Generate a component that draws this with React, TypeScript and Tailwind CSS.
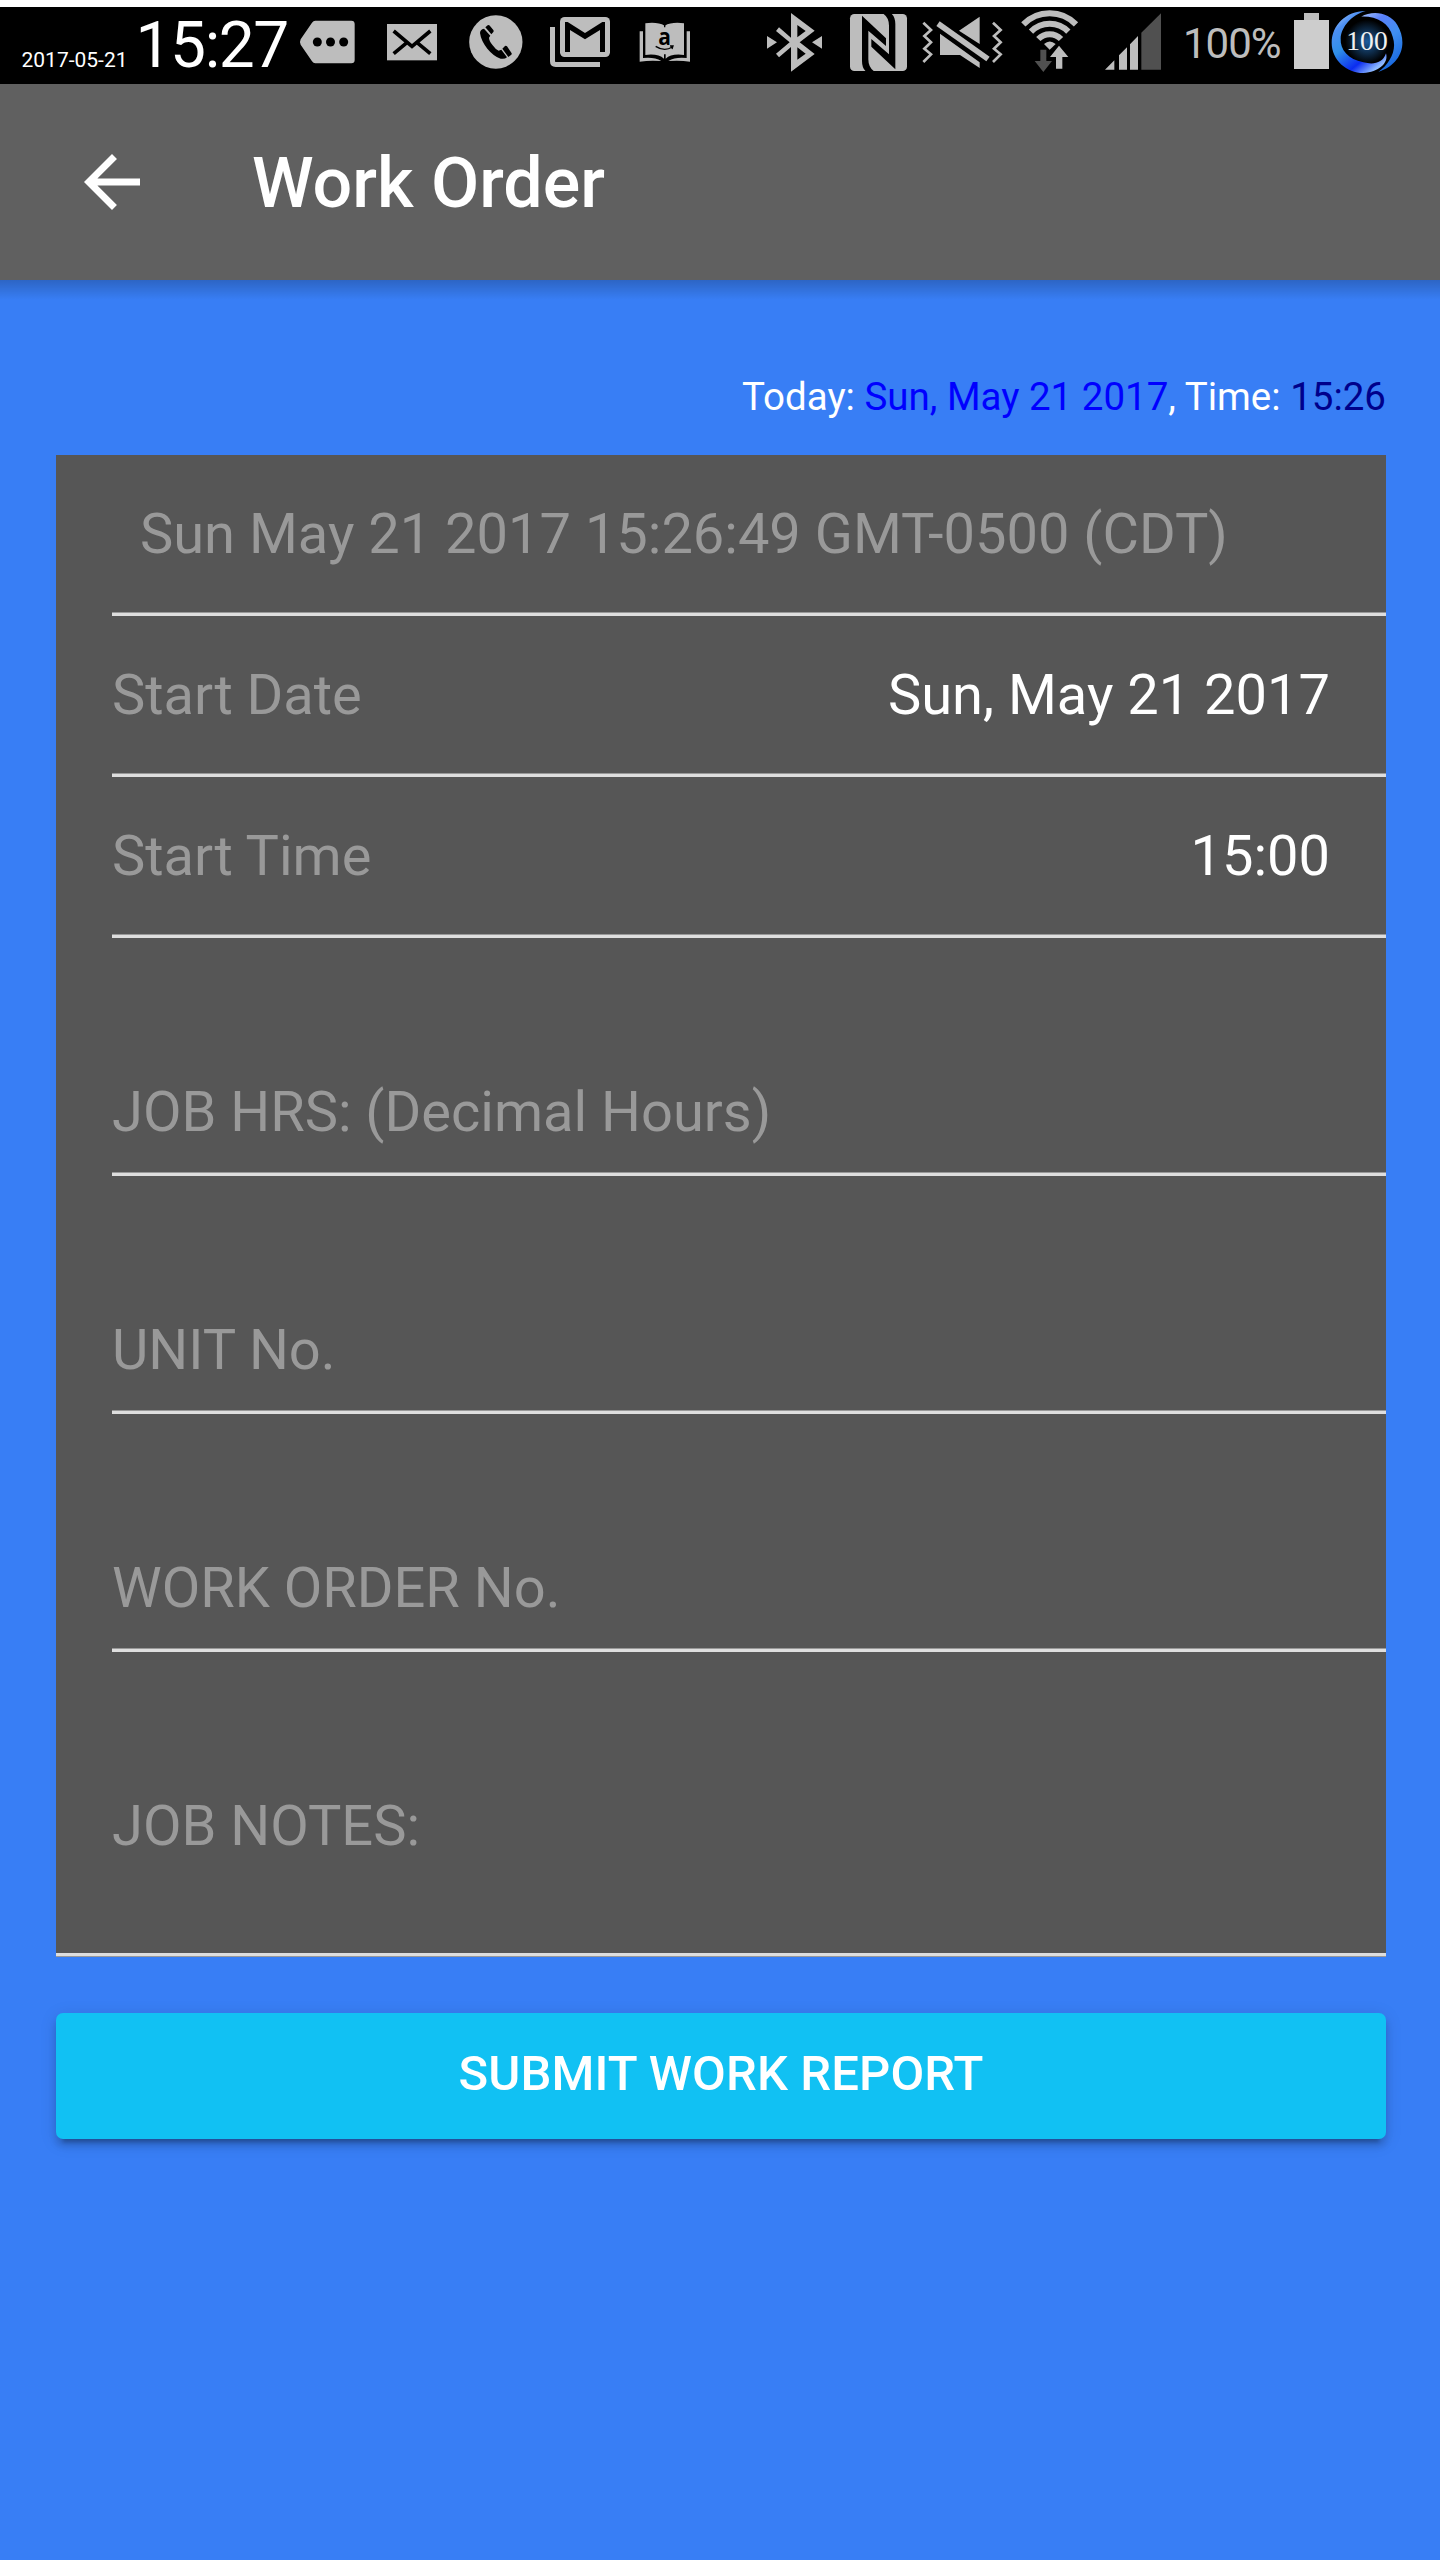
import type { ReactNode } from "react";

const GREY = "#bdbdbd";

function Glyph({ box, className, children }: { box: string; className: string; children: ReactNode }) {
  return (
    <svg viewBox={box} className={`h-[77px] shrink-0 ${className}`} fill={GREY}>
      {children}
    </svg>
  );
}

function StatusBar() {
  return (
    <div className="flex h-[77px] w-full bg-black text-white">
      <div className="flex w-[299px] shrink-0 items-baseline whitespace-nowrap pl-[21.500px]">
        <span className="w-[114px] text-[21px] leading-[77px]">2017-05-21</span>
        <span className="text-[64px] leading-[77px] tracking-[-1.400px]">15:27</span>
      </div>

      {/* message tag */}
      <Glyph box="27 21 171 231" className="w-[57px]">
        <path d="M76 62H184Q194 62 194 72V180Q194 190 184 190H76Q70 190 66 184L32 134Q28 126 32 118L66 68Q70 62 76 62Z" />
        <g fill="#000">
          <circle cx="82" cy="126" r="13.5" />
          <circle cx="121.500" cy="126" r="13.5" />
          <circle cx="161" cy="126" r="13.5" />
        </g>
      </Glyph>

      {/* mail */}
      <Glyph box="288 21 156 231" className="ml-[30px] w-[52px]">
        <rect x="291" y="72" width="150" height="109" />
        <path d="M311 93L366 139L421 93M311 161L348 130M421 161L384 130" fill="none" stroke="#000" strokeWidth="11" />
      </Glyph>

      {/* phone */}
      <Glyph box="54 21 168 231" className="ml-[30px] w-[56px]">
        <circle cx="137.500" cy="126" r="80" />
        <path
          fill="#000"
          d="M102 86Q90 88 90 99Q93 122 112 146Q132 170 152 176Q164 178 171 172L154 149L146 152Q136 148 128 136Q117 122 117 113L121 107Z"
        />
        <path fill="#000" d="M106 82L113 76Q117 74 120 78L130 90Q132 93 130 96L124 103ZM157 146L165 138Q168 136 171 139L184 158Q187 162 183 165L175 171Z" />
      </Glyph>

      {/* stacked mail */}
      <Glyph box="297 21 186 231" className="ml-[25px] w-[62px]">
        <path d="M307.500 81V184Q307.500 193.500 317 193.500H450" fill="none" stroke={GREY} strokeWidth="15" />
        <rect x="330" y="51" width="150" height="120" rx="14" />
        <path fill="#000" d="M345 156V66H353L405 99L457 66H465V156H450V90L405 118L360 90V156Z" />
      </Glyph>

      {/* reader book */}
      <Glyph box="564 21 162 231" className="ml-[27px] w-[54px]">
        <path d="M569 94H579V174Q612 170 634 183Q600 180 569 185ZM720 94H710V174Q677 170 655 183Q690 180 720 185Z" />
        <path d="M586 70Q622 65 644 77Q666 65 702 70V165Q664 160 647 176V163H642V176Q624 160 586 165Z" />
        <path d="M644 70V82" stroke="#000" strokeWidth="4" />
        <text x="644" y="136" fontSize="72" fontWeight="700" textAnchor="middle" fontFamily="Open Sans, sans-serif" fill="#000" textLength="38" lengthAdjust="spacingAndGlyphs">
          a
        </text>
        <path d="M617 139Q643 156 667 141M660 138L669 138L666 147" fill="none" stroke="#000" strokeWidth="4" />
      </Glyph>

      {/* bluetooth */}
      <Glyph box="78 21 171 231" className="ml-[74px] w-[57px]">
        <path
          fillRule="evenodd"
          d="M153 39L224 92L179 127L224 162L153 215V141L117 172L108 161L149 127L108 93L117 82L153 113ZM172 75V112L197 93ZM172 142V179L197 161Z"
        />
        <path d="M81 108L111 127L81 146ZM246 108L216 127L246 146Z" />
      </Glyph>

      {/* nfc */}
      <Glyph box="327 21 177 231" className="ml-[26px] w-[59px]">
        <rect x="330" y="42" width="171" height="171" rx="13" />
        <path
          fill="#000"
          d="M366 47L438 115V138L385 92V178Q385 202 402 214H377Q366 204 366 183ZM466 208L394 140V117L447 163V77Q447 53 430 41H455Q466 52 466 72Z"
        />
      </Glyph>

      {/* vibrate, muted */}
      <Glyph box="543 21 249 231" className="ml-[13px] w-[83px]">
        <path
          d="M550 68L573 90L553 108L573 127L553 146L573 163L550 186M759 68L782 90L762 108L782 127L762 146L782 163L759 186"
          fill="none"
          stroke={GREY}
          strokeWidth="8"
        />
        <path d="M719 50V132L657 92ZM600 101L719 187V204L660 165H600Z" />
        <path d="M594 71L744 177" stroke={GREY} strokeWidth="17" />
      </Glyph>

      {/* wifi */}
      <Glyph box="60 21 180 231" className="ml-[16px] w-[60px]">
        <g fill="none" stroke={GREY} strokeWidth="18">
          <path d="M70 73A110 110 0 0 1 228 73" />
          <path d="M93 95A78 78 0 0 1 205 95" />
          <path d="M115 117A47 47 0 0 1 183 117" />
        </g>
        <path d="M132 132Q149 117 167 132L149 149Z" />
        <path fill="#505050" d="M121 149H139V183H156L130 216L104 183H121Z" />
        <path stroke="#000" strokeWidth="10" paintOrder="stroke" d="M177 137L205 171H187V206H168V171H150Z" />
      </Glyph>

      {/* signal strength */}
      <Glyph box="312 21 174 231" className="ml-[24px] w-[58px]">
        <path d="M315 209L343 181V209ZM357 209V166L381 142V209ZM390 209V133L414 108V209Z" />
        <path fill="#505050" d="M424 209V98L483 40V209Z" />
      </Glyph>

      <span className="ml-[21px] w-[111px] shrink-0 text-[42px] leading-[73px] font-normal tracking-[-1px] text-[#bdbdbd]">100%</span>

      {/* battery */}
      <Glyph box="402 21 105 231" className="w-[35px]">
        <rect x="432" y="39" width="45" height="21" />
        <rect x="402" y="60" width="105" height="147" fill="#cdcdcd" />
      </Glyph>

      {/* battery ring */}
      <Glyph box="513 21 219 231" className="ml-[2px] w-[73px]">
        <defs>
          <linearGradient id="ringLeft" x1="0" y1="0" x2="0.7" y2="1">
            <stop offset="0" stopColor="#c3dcff" />
            <stop offset="0.25" stopColor="#4c8ff2" />
            <stop offset="0.5" stopColor="#2f8fe8" />
            <stop offset="0.8" stopColor="#0b2cf0" />
            <stop offset="1" stopColor="#8db9ff" />
          </linearGradient>
          <linearGradient id="ringRight" x1="0" y1="0" x2="0.5" y2="1">
            <stop offset="0" stopColor="#a9c8ff" />
            <stop offset="0.25" stopColor="#5a80fa" />
            <stop offset="0.6" stopColor="#3f8ff0" />
            <stop offset="1" stopColor="#1b6be0" />
          </linearGradient>
          <radialGradient id="ringGlow">
            <stop offset="0" stopColor="#1d5c9c" />
            <stop offset="1" stopColor="#000" />
          </radialGradient>
        </defs>
        <circle cx="621" cy="125" r="66" fill="url(#ringGlow)" />
        <path
          fill="url(#ringLeft)"
          d="M617 33C560 32 515 75 515 128C515 180 560 219 610 219C655 217 687 190 678 160C668 190 640 195 610 187C565 178 540 150 542 115C544 80 575 45 617 33Z"
        />
        <path fill="url(#ringRight)" d="M603 50C640 30 690 38 712 75C742 125 730 190 655 216C690 190 712 150 698 110C688 70 650 48 603 50Z" />
        <text x="621" y="149" fontSize="82" textAnchor="middle" textLength="124" lengthAdjust="spacingAndGlyphs" fontFamily="Liberation Serif, serif" fill="#f1f1f1">
          100
        </text>
      </Glyph>
    </div>
  );
}

function Line() {
  return (
    <div className="h-1 w-full shrink-0">
      <div className="h-px bg-[#999999]" />
      <div className="h-[3px] bg-[#dedede]" />
    </div>
  );
}

function PickerRow({ label, value }: { label: string; value: string }) {
  return (
    <div className="ml-14 flex h-[161px] flex-col justify-between">
      <div className="flex justify-between pt-[51px] pr-14 leading-[56px]">
        <span className="text-[#999999]">{label}</span>
        <span className="text-white">{value}</span>
      </div>
      <Line />
    </div>
  );
}

function FieldRow({ label }: { label: string }) {
  return (
    <div className="ml-14 flex h-[238px] flex-col justify-between">
      <div className="pt-[146px] leading-[56px] text-[#999999]">{label}</div>
      <Line />
    </div>
  );
}

export default function App() {
  return (
    <div className="flex h-[2560px] w-[1440px] flex-col overflow-hidden bg-[#387ef5] pt-[7px] font-['Roboto',sans-serif] shadow-[inset_0_7px_0_#fff]">
      <StatusBar />

      <header className="flex h-[196px] shrink-0 items-center bg-[#606060] pl-[70px] text-white">
        <svg viewBox="0 0 24 24" className="size-[84px]" fill="currentColor">
          <path d="M20 11H7.830l5.590-5.590L12 4l-8 8 8 8 1.410-1.410L7.830 13H20v-2z" />
        </svg>
        <h1 className="ml-[98px] pt-[2px] text-[70px] leading-[84px] font-medium">Work Order</h1>
      </header>
      <div className="h-5 shrink-0 bg-linear-to-b from-black/20 to-transparent" />

      <main className="flex flex-col pr-[54px] pl-14">
        <p className="h-[155px] pt-[73px] text-right text-[38.500px] leading-[48px] whitespace-nowrap text-white">
          Today: <span className="text-[#0000ff]">Sun, May 21 2017</span>, Time: <span className="text-[#00008b]">15:26</span>
        </p>

        <section className="flex flex-col bg-[#565656] text-[56px] whitespace-nowrap">
          <div className="ml-14 flex h-[161px] flex-col justify-between">
            <div className="pt-[51px] pl-7 leading-[56px] text-[#999999]">Sun May 21 2017 15:26:49 GMT-0500 (CDT)</div>
            <Line />
          </div>
          <PickerRow label="Start Date" value="Sun, May 21 2017" />
          <PickerRow label="Start Time" value="15:00" />
          <FieldRow label="JOB HRS: (Decimal Hours)" />
          <FieldRow label="UNIT No." />
          <FieldRow label="WORK ORDER No." />
          <div className="flex h-[305px] flex-col justify-between">
            <div className="pt-[146px] pl-14 leading-[56px] text-[#999999]">JOB NOTES:</div>
            <div className="h-1">
              <div className="h-[3px] bg-[#dedede]" />
              <div className="h-px bg-[#999999]" />
            </div>
          </div>
        </section>

        <button className="mt-[55.500px] h-[126.500px] rounded-[7px] bg-[#11c1f3] pb-[3px] text-[49px] leading-[56px] font-medium tracking-[0.110px] text-white shadow-[0_7px_7px_rgba(0,0,0,0.14),0_10.500px_3.500px_-7px_rgba(0,0,0,0.2),0_3.500px_17.500px_rgba(0,0,0,0.12)]">
          SUBMIT WORK REPORT
        </button>
      </main>
    </div>
  );
}
